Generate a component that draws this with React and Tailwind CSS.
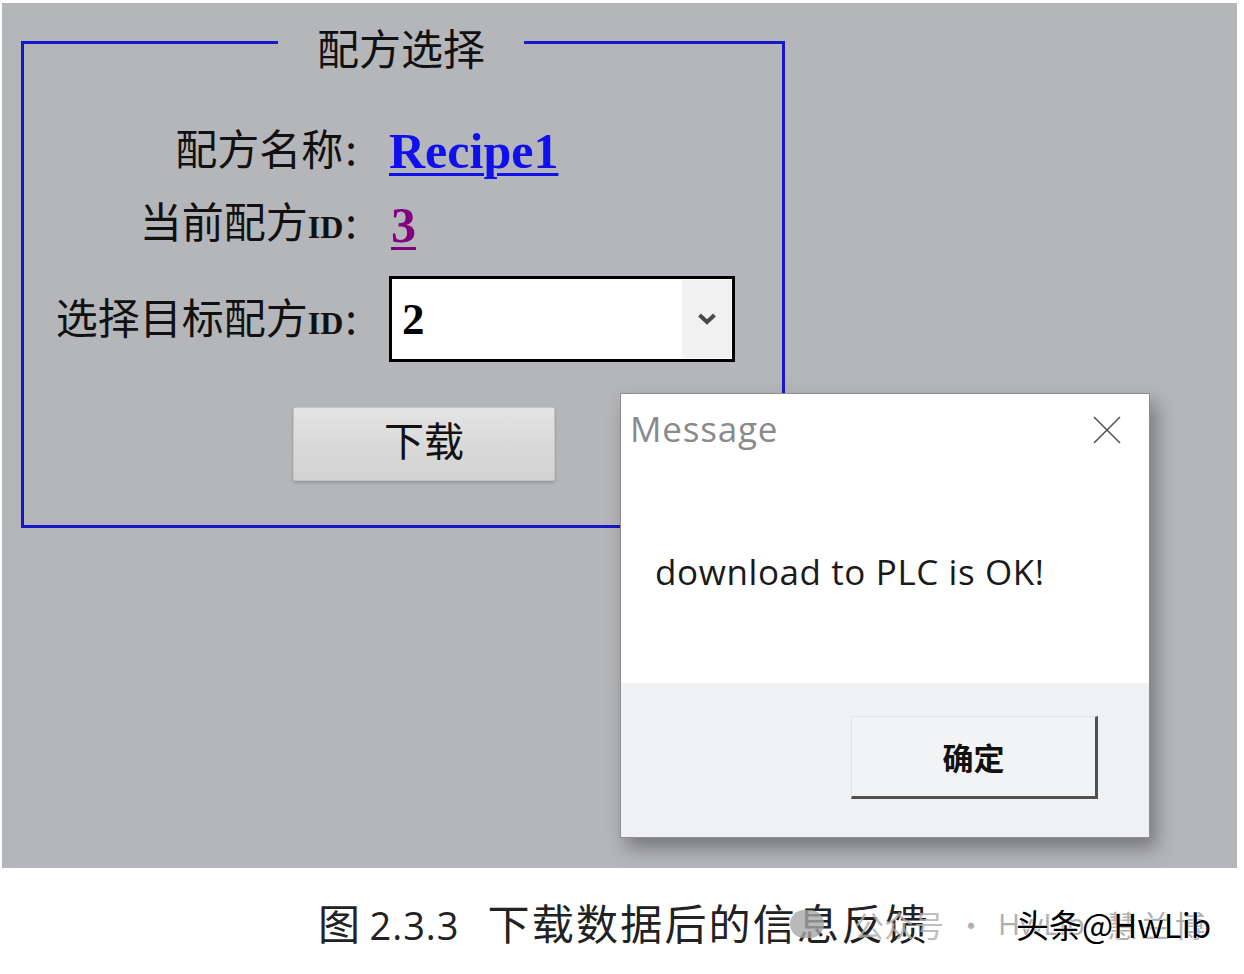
import React from 'react';

const cjk = "font-['Noto_Sans_CJK_SC',sans-serif]";
const serif = "font-['Liberation_Serif','Noto_Sans_CJK_SC',serif]";

function Label({ text, id }) {
  return (
    <div className={`w-[333px] text-right text-[42px] leading-[50px] text-[#111] ${cjk}`}>
      {text}
      {id && <span className={`${serif} font-bold text-[32px]`}>ID</span>}
      <span className="ml-[2px]">:</span>
    </div>
  );
}

function MessageBox() {
  return (
    <div className="absolute left-[618px] top-[390px] w-[530px] h-[445px] bg-white border border-[#8e8e8e] shadow-[6px_10px_18px_rgba(0,0,0,0.35)] flex flex-col">
      <div className="h-[289px] flex flex-col">
        <div className="flex items-start justify-between pl-[9px] pr-[27px] pt-[12px]">
          <span className="font-['Open_Sans',sans-serif] text-[35px] leading-[46px] tracking-[0.8px] text-[#8a8a8a]">Message</span>
          <svg width="30" height="30" viewBox="0 0 30 30" className="mt-[9px]">
            <path d="M2 2 L28 28 M28 2 L2 28" stroke="#555" strokeWidth="1.6" fill="none" />
          </svg>
        </div>
        <div className="pl-[34px] mt-[96px] font-['Open_Sans',sans-serif] text-[35px] leading-[48px] tracking-[0.6px] text-[#1a1a1a]">
          download to PLC is OK!
        </div>
      </div>
      <div className="flex-1 bg-[#f0f1f3] flex justify-end pt-[33px] pr-[51px]">
        <button className="w-[247px] h-[83px] bg-[#f2f3f5] border-t border-l border-[#e4e4e4] border-r-[3px] border-b-[3px] border-r-[#505050] border-b-[#505050] flex items-center justify-center">
          <span className={`${cjk} font-bold text-[31px] leading-[40px] text-[#111]`}>确定</span>
        </button>
      </div>
    </div>
  );
}

export default function App() {
  return (
    <div className="w-[1244px] h-[974px] bg-white pt-[3px] pl-[2px] overflow-hidden">
      <div className="relative w-[1235px] h-[865px] bg-[#b5b6b9] pt-[21px] pl-[19px]">
        <div className="w-[764px] flex flex-col">
          <div className="flex items-end h-[46px]">
            <div className="w-[257px] h-[29px] border-t-[3px] border-l-[3px] border-[#1818c8]" />
            <div className={`px-[39px] text-[42px] leading-[46px] text-[#111] ${cjk}`}>配方选择</div>
            <div className="flex-1 h-[29px] border-t-[3px] border-r-[3px] border-[#1818c8]" />
          </div>
          <div className="h-[458px] border-x-[3px] border-b-[3px] border-[#1818c8] pt-[52px] flex flex-col">
            <div className="flex items-center h-[50px]">
              <Label text="配方名称" />
              <span className={`ml-[32px] ${serif} font-bold text-[50px] leading-[50px] text-[#1010ee] underline decoration-[3px] underline-offset-[5px] mt-[8px]`}>Recipe1</span>
            </div>
            <div className="flex items-center h-[50px] mt-[26px]">
              <Label text="当前配方" id />
              <span className={`ml-[34px] ${serif} font-bold text-[50px] leading-[50px] text-[#800080] underline decoration-[3px] underline-offset-[5px] mt-[4px]`}>3</span>
            </div>
            <div className="flex items-center h-[86px] mt-[28px]">
              <Label text="选择目标配方" id />
              <div className="ml-[32px] w-[346px] h-[86px] border-[3px] border-black bg-white flex items-center">
                <span className={`pl-[10px] ${serif} font-bold text-[45px] leading-[50px] text-black flex-1`}>2</span>
                <div className="w-[49px] h-[78px] bg-[#f1f1f1] flex items-center justify-center mr-[1px]">
                  <svg width="20" height="14" viewBox="0 0 20 14">
                    <path d="M2.5 3 L10 10 L17.5 3" stroke="#4a4a4a" strokeWidth="4" fill="none" />
                  </svg>
                </div>
              </div>
            </div>
            <button className="ml-[269px] mt-[45px] w-[262px] h-[74px] rounded-[2px] border border-[#c4c4c4] bg-gradient-to-b from-[#e4e4e4] via-[#dadada] to-[#d2d2d2] shadow-[0_2px_3px_rgba(0,0,0,0.18)] flex items-center justify-center">
              <span className={`${cjk} text-[40px] leading-[50px] text-[#111] -mt-[10px]`}>下载</span>
            </button>
          </div>
        </div>
        <MessageBox />
      </div>
      <div className="relative h-[106px] pl-[316px] flex items-center">
        <span className={`${cjk} text-[42px] leading-[50px] text-[#222] mt-[4px]`}>
          图 <span className="font-['Open_Sans',sans-serif] text-[38px] tracking-[1px]">2.3.3</span>
          <span className="ml-[28px] tracking-[2.2px]">下载数据后的信息反馈</span>
        </span>
        <div className="absolute left-[788px] top-[38px] flex items-center text-[#b0b0b0] text-[30px] leading-[36px]">
          <div className="w-[34px] h-[28px] rounded-full bg-[#a8a8a8] opacity-80" />
          <span className={`${cjk} ml-[30px] opacity-80`}>公众号</span>
          <span className={`${cjk} ml-[12px]`}>·</span>
          <span className="font-['Open_Sans',sans-serif] ml-[12px]">HwLib</span>
          <span className={`${cjk} ml-[22px] tracking-[4px]`}>慧兰博</span>
        </div>
        <span className={`absolute left-[1014px] top-[36px] ${cjk} text-[33px] leading-[40px] text-black [-webkit-text-stroke:0.6px_#fff] [paint-order:stroke_fill] [text-shadow:0_0_2px_#fff]`}>
          头条@HwLib
        </span>
      </div>
    </div>
  );
}
